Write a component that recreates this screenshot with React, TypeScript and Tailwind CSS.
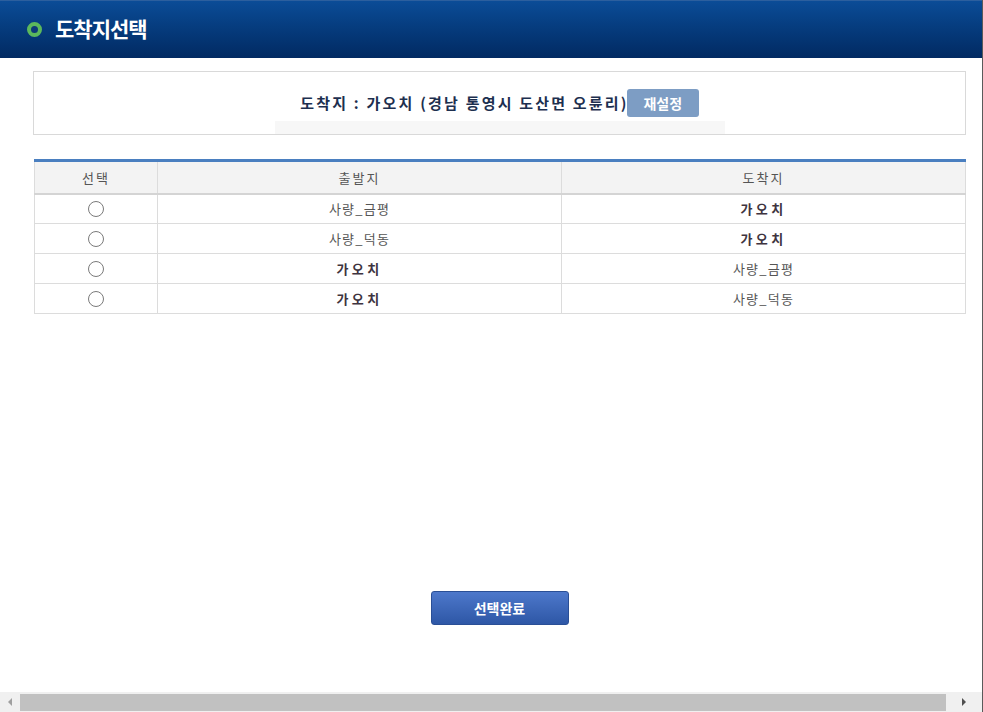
import React from "react";

const KR = { fontFamily: '"Noto Sans CJK KR", "Noto Sans", sans-serif' };

function Radio() {
  return <div className="mx-auto w-[16px] h-[16px] rounded-full border border-[#7a7a7a] bg-white" />;
}

const rows = [
  { from: "사량_금평", to: "가오치", fromBold: false, toBold: true },
  { from: "사량_덕동", to: "가오치", fromBold: false, toBold: true },
  { from: "가오치", to: "사량_금평", fromBold: true, toBold: false },
  { from: "가오치", to: "사량_덕동", fromBold: true, toBold: false },
];

const normal = "text-[#555] tracking-[1.2px]";
const bold = "font-bold text-[#3e3440] tracking-[3.3px]";

export default function App() {
  return (
    <div className="w-[983px] h-[712px] flex flex-col bg-white border-r border-[#5a5a5a] overflow-hidden" style={KR}>
      <div className="h-[58px] shrink-0 flex items-center pl-[27px] bg-gradient-to-b from-[#0b4c97] to-[#022a62] border-t border-[#2c5f9e]">
        <div className="w-[15px] h-[15px] rounded-full border-[4px] border-[#5cb85c] bg-[#0d3a78]" />
        <span className="ml-[13px] text-white text-[21px] font-bold tracking-[-1px] leading-none pb-[3px]">도착지선택</span>
      </div>

      <div className="flex-1 px-[33px] pt-[13px] pr-[16px]">
        <div className="h-[64px] border border-[#d9d9d9] flex flex-col items-center">
          <div className="flex items-center mt-[17px] h-[28px]">
            <span className="text-[15px] font-bold text-[#1d2f4f] tracking-[2.2px]">도착지 : 가오치 (경남 통영시 도산면 오륜리)</span>
            <button className="ml-[-2px] w-[72px] h-[28px] rounded-[3px] bg-[#7d9dc4] text-white text-[14px] font-bold">재설정</button>
          </div>
          <div className="mt-[4px] w-[450px] h-[14px] bg-[#f7f7f7]" />
        </div>

        <table className="mt-[24px] w-[932px] border-collapse border-t-[3px] border-[#4a7fc0] text-[13px] ml-[1px]">
          <thead>
            <tr className="h-[33px] bg-[#f3f3f3] text-[#555] tracking-[2px]">
              <th className="w-[123px] font-normal border border-[#dcdcdc] border-b-2 border-b-[#d4d4d4] border-t-[#e4eaf3]">선택</th>
              <th className="w-[404px] font-normal border border-[#dcdcdc] border-b-2 border-b-[#d4d4d4] border-t-[#e4eaf3]">출발지</th>
              <th className="font-normal border border-[#dcdcdc] border-b-2 border-b-[#d4d4d4] border-t-[#e4eaf3]">도착지</th>
            </tr>
          </thead>
          <tbody>
            {rows.map((r, i) => (
              <tr key={i} className="h-[30px]">
                <td className="border border-[#dcdcdc]"><Radio /></td>
                <td className={"border border-[#dcdcdc] text-center " + (r.fromBold ? bold : normal)}>{r.from}</td>
                <td className={"border border-[#dcdcdc] text-center " + (r.toBold ? bold : normal)}>{r.to}</td>
              </tr>
            ))}
          </tbody>
        </table>

        <div className="flex justify-center mt-[277px]">
          <button className="w-[138px] h-[34px] rounded-[3px] bg-gradient-to-b from-[#4d78cb] to-[#2e57a6] border border-[#2a4f96] text-white text-[14px] font-bold">선택완료</button>
        </div>
      </div>

      <div className="h-[20px] shrink-0 bg-[#f0f0f0] flex items-center">
        <div className="w-[20px] flex justify-center">
          <div className="w-0 h-0 border-y-[4px] border-y-transparent border-r-[4px] border-r-[#a0a0a0]" />
        </div>
        <div className="w-[926px] h-[17px] bg-[#c1c1c1]" />
        <div className="flex-1 flex justify-center">
          <div className="w-0 h-0 border-y-[4px] border-y-transparent border-l-[4px] border-l-[#505050]" />
        </div>
      </div>
    </div>
  );
}
